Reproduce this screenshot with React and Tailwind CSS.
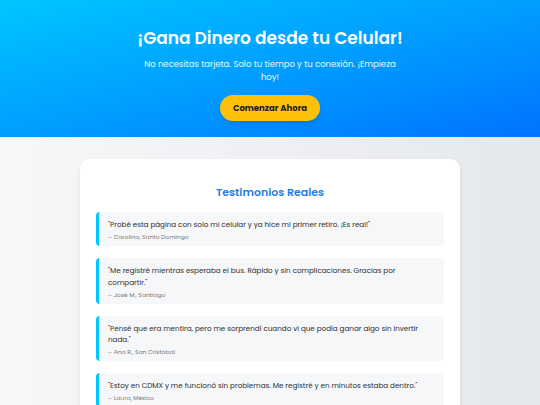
import React from "react";

const testimonios = [
  {
    texto: "\"Probé esta página con solo mi celular y ya hice mi primer retiro. ¡Es real!\"",
    autor: "– Carolina, Santo Domingo",
  },
  {
    texto:
      "\"Me registré mientras esperaba el bus. Rápido y sin complicaciones. Gracias por compartir.\"",
    autor: "– José M., Santiago",
  },
  {
    texto:
      "\"Pensé que era mentira, pero me sorprendí cuando vi que podía ganar algo sin invertir nada.\"",
    autor: "– Ana R., San Cristóbal",
  },
  {
    texto:
      "\"Estoy en CDMX y me funcionó sin problemas. Me registré y en minutos estaba dentro.\"",
    autor: "– Laura, México",
  },
];

export default function App() {
  return (
    <div className="min-h-[405px] bg-gradient-to-r from-[#f8f8fa] to-[#e5e8eb] font-['Poppins','Open_Sans',sans-serif]">
      <header className="flex h-[137px] flex-col items-center bg-gradient-to-br from-[#00c6ff] to-[#0072ff] px-4 pt-[27px] text-center text-white">
        <h1 className="text-[17px] font-semibold leading-[22px]">
          ¡Gana Dinero desde tu Celular!
        </h1>
        <p className="mt-[9px] w-[262px] text-[8.5px] leading-[13px] text-white/90">
          No necesitas tarjeta. Solo tu tiempo y tu conexión. ¡Empieza hoy!
        </p>
        <button
          type="button"
          className="mt-[11px] h-[26px] w-[100px] rounded-full bg-[#ffc107] text-[8.5px] font-bold text-[#222] shadow-md"
        >
          Comenzar Ahora
        </button>
      </header>

      <main className="flex justify-center pt-[22px]">
        <section className="w-[380px] rounded-[10px] bg-white px-4 pt-[26px] pb-4 shadow-md">
          <h2 className="mb-[13px] text-center text-[11px] font-semibold leading-[14px] text-[#1a7fe8]">
            Testimonios Reales
          </h2>

          <div className="flex flex-col gap-[12px]">
            {testimonios.map((t) => (
              <div
                key={t.autor}
                className="rounded-[4px] border-l-[3px] border-[#00c6ff] bg-[#f6f7f9] pt-[7px] pr-3 pb-[5px] pl-[9px]"
              >
                <p className="text-[7.2px] leading-[11.5px] text-[#2f2f2f]">{t.texto}</p>
                <p className="mt-[2.5px] text-[6px] leading-[8px] text-[#777]">{t.autor}</p>
              </div>
            ))}
          </div>
        </section>
      </main>
    </div>
  );
}
